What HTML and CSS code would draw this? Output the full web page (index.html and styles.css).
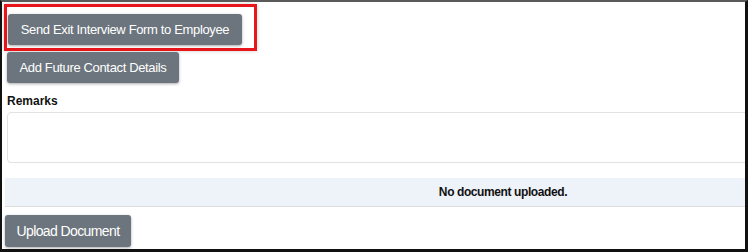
FILE: index.html
```html
<!DOCTYPE html>
<html lang="en">

<head>
  <meta charset="utf-8" />
  <title>Exit Interview</title>
  <meta name="viewport" content="width=device-width, initial-scale=1">
  <link rel="stylesheet" href="styles.css">
</head>

<body>
  <div class="frame">
    <div class="content">
      <!-- highlighted action -->
      <div class="highlight">
        <button class="btn btn-send">Send Exit Interview Form to Employee</button>
      </div>
      <button class="btn btn-contact">Add Future Contact Details</button>

      <label class="field-label" for="remarks">Remarks</label>
      <textarea id="remarks" class="remarks"></textarea>

      <div class="doc-status">No document uploaded.</div>

      <button class="btn btn-upload">Upload Document</button>
    </div>
  </div>
</body>

</html>
```

FILE: styles.css
```css
/* ===== RESET & BODY ===== */
* {
  box-sizing: border-box;
  margin: 0;
  padding: 0
}

body {
  font-family: "Liberation Sans", Arial, sans-serif;
  background: #fff;
  color: #212529
}

/* ===== FRAME ===== */
.frame {
  width: 748px;
  height: 252px;
  border: 2px solid #111;
  border-top-color: #5a5a5a;
  border-right-width: 3px;
  border-bottom-width: 3px;
  overflow: hidden
}

.content {
  width: 1000px;
  display: flex;
  flex-direction: column;
  align-items: flex-start
}

/* ===== BUTTONS ===== */
.btn {
  font-family: inherit;
  font-size: 13px;
  letter-spacing: -0.35px;
  line-height: 15px;
  white-space: nowrap;
  text-align: center;
  color: #fff;
  background: #6c757d;
  border: 0;
  border-radius: 3px;
  padding: 0;
  box-shadow: 0 1px 3px #0005;
  cursor: pointer
}

.highlight {
  margin: 2px 0 0 2px;
  border: 3px solid #e8161b;
  padding: 7px 12px 3px 1px;
  box-shadow: 0 0 4px #0003
}

.btn-send {
  width: 234px;
  height: 31px
}

.btn-contact {
  margin: 1px 0 0 5px;
  width: 172px;
  height: 31px
}

.btn-upload {
  margin: 8px 0 0 3px;
  width: 126px;
  height: 32px;
  font-size: 14px;
  letter-spacing: -0.6px
}

/* ===== REMARKS ===== */
.field-label {
  margin: 11px 0 0 5px;
  font-size: 12px;
  font-weight: 700;
  line-height: 14px;
  color: #111
}

.remarks {
  margin: 4px 0 0 5px;
  width: 990px;
  height: 51px;
  border: 1px solid #e2e2e2;
  border-radius: 4px;
  resize: none
}

/* ===== DOCUMENTS ===== */
.doc-status {
  margin: 15px 0 0 3px;
  width: 996px;
  height: 29px;
  background: #eef2f9;
  border-bottom: 1px solid #dcdcdc;
  font-size: 12px;
  font-weight: 700;
  letter-spacing: -0.4px;
  color: #111;
  display: flex;
  align-items: center;
  justify-content: center
}
```
